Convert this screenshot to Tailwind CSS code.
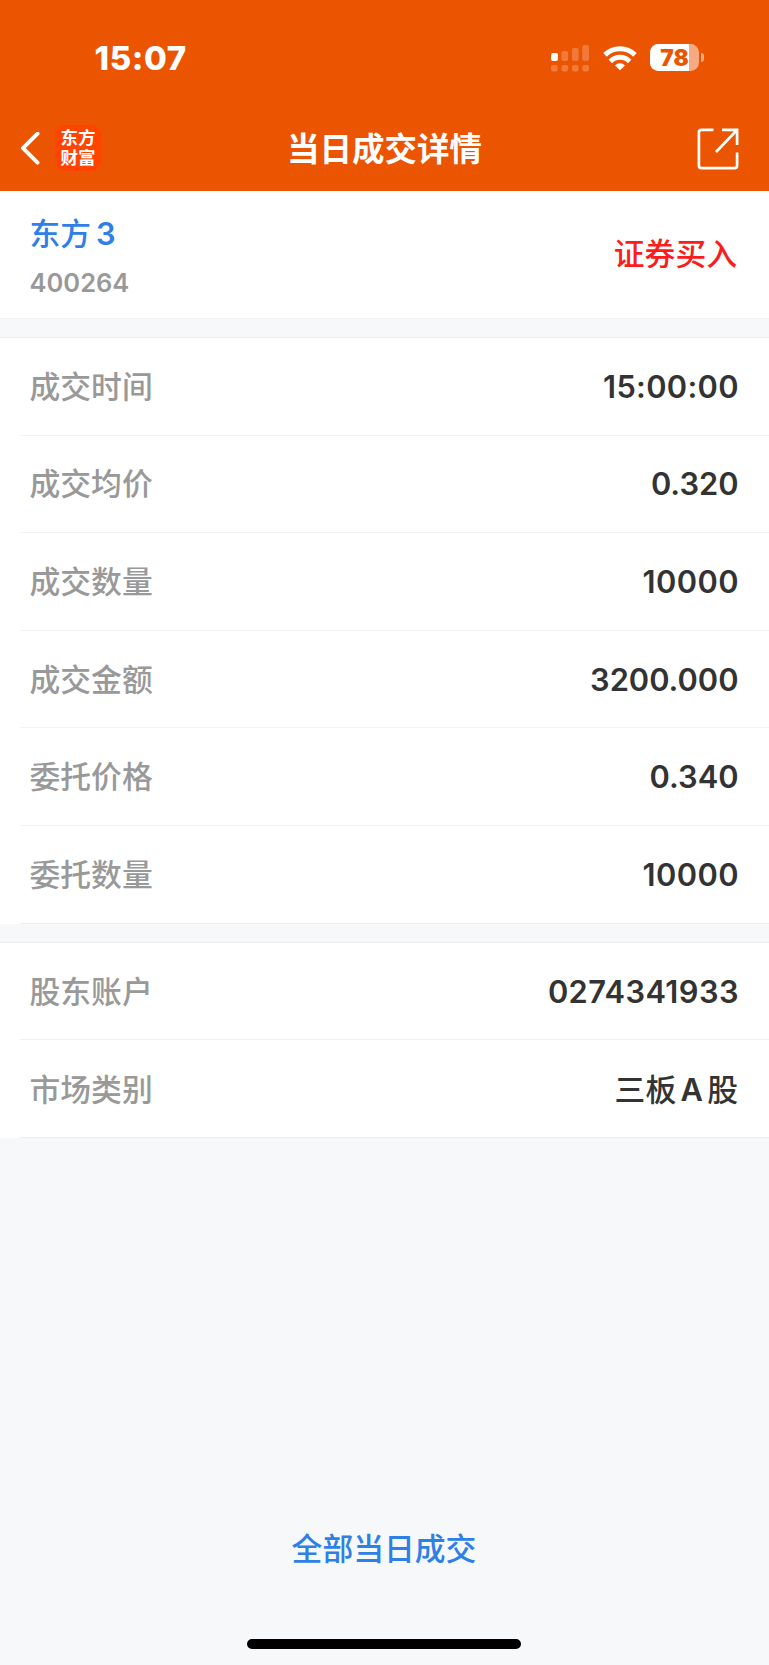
<!DOCTYPE html>
<html lang="zh-CN">
    <head>
        <meta charset="UTF-8">
        <meta name="viewport" content="width=device-width, initial-scale=1.0">
        <!-- Tailwind CDN -->
        <script src="https://cdn.jsdelivr.net/npm/@tailwindcss/browser@4"></script>
        <title>当日成交详情</title>
    </head>
    <body class="bg-[#f6f8fa]">
        <div class="flex h-[1665px] w-[769px] flex-col overflow-hidden bg-[#f6f8fa] font-['Inter','Noto_Sans_CJK_SC',sans-serif] text-[30.8px] leading-none font-medium">
            <!-- Header -->
            <header class="h-[191px] shrink-0 bg-[#eb5502] text-white">
                <div class="flex h-[115px] items-center justify-between pr-[65px] pl-[94.5px]">
                    <div class="pt-px text-[33px] font-extrabold tracking-[0.6px]">15:07</div>
                    <div class="flex items-center">
                        <svg class="h-[28px] w-[39px]" viewBox="0 0 39 28" fill="#fff">
                            <rect x="0" y="9" width="7" height="8" rx="2"/>
                            <g opacity=".22">
                                <rect x="10.5" y="7" width="6.6" height="10" rx="2"/>
                                <rect x="21" y="4" width="6.6" height="13" rx="2"/>
                                <rect x="31.3" y="1" width="6.7" height="16" rx="2"/>
                                <rect x="0" y="21" width="6.6" height="6.6" rx="2"/>
                                <rect x="10.5" y="21" width="6.6" height="6.6" rx="2"/>
                                <rect x="21" y="21" width="6.6" height="6.6" rx="2"/>
                                <rect x="31.3" y="21" width="6.7" height="6.6" rx="2"/>
                            </g>
                        </svg>
                        <svg class="ml-[13px] h-[28px] w-[34px]" viewBox="0 0 34 28" fill="none" stroke="#fff" stroke-width="5">
                            <path d="M2 10.9a21.4 21.4 0 0 1 30 0"/>
                            <path d="M7.4 17.4a13.4 13.4 0 0 1 19.2 0"/>
                            <path d="M12 21.4a7 7 0 0 1 10 0L17 26.2z" fill="#fff" stroke="none"/>
                        </svg>
                        <div class="relative ml-[13px] h-[27px] w-[49px] overflow-hidden rounded-[8.5px] bg-white/50">
                            <div class="h-full w-[38.5px] bg-white"></div>
                            <div class="absolute inset-0 flex items-center justify-center pt-px text-[22.5px] font-black text-[#eb5502]">78</div>
                        </div>
                        <div class="ml-[2px] h-[9px] w-[3px] rounded-r-full bg-white/50"></div>
                    </div>
                </div>
                <div class="grid h-[67px] grid-cols-[1fr_auto_1fr] items-center px-[20px]">
                    <div class="flex items-center">
                        <svg class="h-[34px] w-[21px]" viewBox="0 0 21 34" fill="none" stroke="#fff" stroke-width="4" stroke-linecap="round" stroke-linejoin="round">
                            <path d="M17.5 1.7 3 16.2l14.5 14.5"/>
                        </svg>
                        <div class="ml-[14px] flex h-[46px] w-[46px] -translate-y-px flex-col items-center justify-center rounded-[9px] bg-[#ff4400] text-[17.5px] leading-[19.5px] font-bold">
                            <span>东方</span>
                            <span>财富</span>
                        </div>
                    </div>
                    <h1 class="pt-[4px] text-[32.5px] font-bold">当日成交详情</h1>
                    <svg class="mr-[9px] h-[43px] w-[43px] justify-self-end" viewBox="0 0 43 43" fill="none" stroke="#fff" stroke-width="2.7">
                        <path d="M16.5 2.9H4.5Q1.9 2.9 1.9 5.5v33q0 2.6 2.6 2.6h33q2.6 0 2.6-2.6V25.5M25 2.9h15.1V18M39.5 3.5 19 25"/>
                    </svg>
                </div>
            </header>

            <!-- Stock -->
            <section class="flex h-[127px] shrink-0 items-center justify-between rounded-t-[3px] bg-white pr-[32px] pl-[29.5px]">
                <div class="pt-[6px]">
                    <div class="text-[#2e7fe6]">东方<span class="ml-[5px] font-[570]">3</span></div>
                    <div class="mt-[20px] text-[25.5px] font-[570] text-[#999]">400264</div>
                </div>
                <div class="text-[#fb1c1c]">证券买入</div>
            </section>

            <!-- Trade -->
            <section class="shrink-0 border-t border-[#f0f1f3] pt-[18px]">
                <div class="border-t border-[#ebedef] bg-white pl-[20px] text-[#333]">
                    <div class="flex h-[97.6px] items-center justify-between border-b border-[#f3f3f4] pt-[2px] pr-[30.5px] pl-[9.5px]">
                        <span class="text-[#999]">成交时间</span><span class="-mr-[0.3px] font-[570] tracking-[0.3px]">15:00:00</span>
                    </div>
                    <div class="flex h-[97.6px] items-center justify-between border-b border-[#f3f3f4] pt-[2px] pr-[30.5px] pl-[9.5px]">
                        <span class="text-[#999]">成交均价</span><span class="font-[570]">0.320</span>
                    </div>
                    <div class="flex h-[97.6px] items-center justify-between border-b border-[#f3f3f4] pt-[2px] pr-[30.5px] pl-[9.5px]">
                        <span class="text-[#999]">成交数量</span><span class="-mr-[0.4px] font-[570] tracking-[0.4px]">10000</span>
                    </div>
                    <div class="flex h-[97.6px] items-center justify-between border-b border-[#f3f3f4] pt-[2px] pr-[30.5px] pl-[9.5px]">
                        <span class="text-[#999]">成交金额</span><span class="font-[570]">3200.000</span>
                    </div>
                    <div class="flex h-[97.6px] items-center justify-between border-b border-[#f3f3f4] pt-[2px] pr-[30.5px] pl-[9.5px]">
                        <span class="text-[#999]">委托价格</span><span class="font-[570]">0.340</span>
                    </div>
                    <div class="flex h-[97.6px] items-center justify-between border-b border-[#ebedef] pt-[2px] pr-[30.5px] pl-[9.5px]">
                        <span class="text-[#999]">委托数量</span><span class="-mr-[0.4px] font-[570] tracking-[0.4px]">10000</span>
                    </div>
                </div>
            </section>

            <!-- Account -->
            <section class="mt-[18px] shrink-0 border-t border-[#ebedef] bg-white pl-[20px] text-[#333]">
                <div class="flex h-[97.7px] items-center justify-between border-b border-[#f0f1f2] pt-[3px] pr-[30.5px] pl-[9.5px]">
                    <span class="text-[#999]">股东账户</span><span class="-mr-[0.4px] font-[570] tracking-[0.4px]">0274341933</span>
                </div>
                <div class="flex h-[97.7px] items-center justify-between border-b border-[#ebedef] pt-[4px] pr-[31px] pl-[9.5px]">
                    <span class="text-[#999]">市场类别</span><span>三板<span class="mx-[4.3px] font-[570]">A</span>股</span>
                </div>
            </section>

            <!-- Footer -->
            <footer class="mt-auto flex flex-col items-center pr-px pb-[16px]">
                <a class="mb-[74px] text-[#2e7fe6]">全部当日成交</a>
                <div class="h-[10px] w-[274px] rounded-full bg-black"></div>
            </footer>
        </div>
    </body>
</html>
